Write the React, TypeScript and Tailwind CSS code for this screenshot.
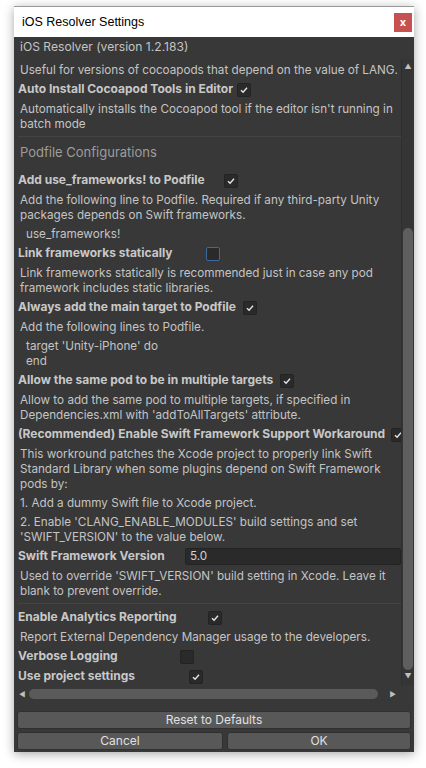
import React from "react";

const font = { fontFamily: "Inter, 'Noto Sans', sans-serif" };

function Check({ checked, focus }: { checked?: boolean; focus?: boolean }) {
  return (
    <div
      className={
        "w-[14px] h-[14px] shrink-0 rounded-[2px] border bg-[#2a2a2a] flex items-center justify-center mt-[2px] " +
        (focus ? "border-[#3d6a9e]" : "border-[#232323]")
      }
    >
      {checked && (
        <svg width="10" height="10" viewBox="0 0 10 10">
          <path d="M2 5.2 L4.1 7.3 L8 2.8" fill="none" stroke="#e4e4e4" strokeWidth="1.4" />
        </svg>
      )}
    </div>
  );
}

function Toggle({ label, x, checked, focus, first }: { label: string; x: number; checked?: boolean; focus?: boolean; first?: boolean }) {
  return (
    <div className={"flex items-center h-[18px] pl-[4px] " + (first ? "" : "mt-[2px]")}>
      <div className="font-bold text-[12px] text-[#c8c8c8] whitespace-nowrap" style={{ width: x - 18 }}>
        {label}
      </div>
      <Check checked={checked} focus={focus} />
    </div>
  );
}

function Help({ lines, code }: { lines: string[]; code?: boolean }) {
  return (
    <div className={"mt-[4px] text-[11.7px] leading-[15px] text-[#c4c4c4] whitespace-nowrap " + (code ? "pl-[12px]" : "pl-[6px]")}>
      {lines.map((l) => (
        <div key={l}>{l}</div>
      ))}
    </div>
  );
}

function Sep() {
  return <div className="mt-[4px] ml-[4px] h-px bg-[#444444] w-[383px]" />;
}

export default function App() {
  return (
    <div className="bg-white min-h-[768px] pt-[6px] pl-[14px]" style={font}>
      <div className="w-[400px] h-[746px] flex flex-col shadow-[0_2px_10px_rgba(0,0,0,0.35)] border-t border-[#9a9a9a]">
        <div className="h-[30px] bg-white flex items-center justify-between pl-[8px] pr-[2px]">
          <span className="text-[12.5px] text-black" style={{ fontFamily: "'Liberation Sans', sans-serif" }}>iOS Resolver Settings</span>
          <div className="w-[18px] h-[19px] bg-[#c75050] flex items-center justify-center text-white text-[11px] font-bold leading-none">x</div>
        </div>
        <div className="flex-1 bg-[#383838] flex flex-col">
          <div className="h-[22px] pt-[1px] pl-[6px] text-[12.1px] leading-[18px] text-[#c4c4c4]">iOS Resolver (version 1.2.183)</div>
          <div className="h-[626px] flex">
            <div className="w-[387px] overflow-hidden">
              <div className="w-[420px]">
                <Help lines={["Useful for versions of cocoapods that depend on the value of LANG."]} />
                <Toggle label="Auto Install Cocoapod Tools in Editor" x={237} checked />
                <Help lines={["Automatically installs the Cocoapod tool if the editor isn't running in", "batch mode"]} />
                <Sep />
                <div className="mt-[6px] h-[18px] pl-[6px] text-[13px] leading-[18px] text-[#9d9d9d]">Podfile Configurations</div>
                <div className="mt-[10px]">
                  <Toggle label="Add use_frameworks! to Podfile" x={224} checked first />
                </div>
                <Help lines={["Add the following line to Podfile. Required if any third-party Unity", "packages depends on Swift frameworks."]} />
                <Help code lines={["use_frameworks!"]} />
                <Toggle label="Link frameworks statically" x={206} focus />
                <Help lines={["Link frameworks statically is recommended just in case any pod", "framework includes static libraries."]} />
                <Toggle label="Always add the main target to Podfile" x={243} checked />
                <Help lines={["Add the following lines to Podfile."]} />
                <Help code lines={["target 'Unity-iPhone' do", "end"]} />
                <Toggle label="Allow the same pod to be in multiple targets" x={280} checked />
                <Help lines={["Allow to add the same pod to multiple targets, if specified in", "Dependencies.xml with 'addToAllTargets' attribute."]} />
                <Toggle label="(Recommended) Enable Swift Framework Support Workaround" x={391} checked />
                <Help lines={["This workround patches the Xcode project to properly link Swift", "Standard Library when some plugins depend on Swift Framework", "pods by:"]} />
                <Help lines={["1. Add a dummy Swift file to Xcode project."]} />
                <Help lines={["2. Enable 'CLANG_ENABLE_MODULES' build settings and set", "'SWIFT_VERSION' to the value below."]} />
                <div className="mt-[2px] flex items-center h-[18px] pl-[4px]">
                  <div className="w-[167px] font-bold text-[12px] text-[#c8c8c8] whitespace-nowrap">Swift Framework Version</div>
                  <div className="w-[216px] h-[17px] bg-[#2a2a2a] border border-[#232323] rounded-[2px] text-[11.7px] leading-[15px] text-[#d2d2d2] pl-[4px]">5.0</div>
                </div>
                <Help lines={["Used to override 'SWIFT_VERSION' build setting in Xcode. Leave it", "blank to prevent override."]} />
                <Sep />
                <div className="mt-[4px]">
                  <Toggle label="Enable Analytics Reporting" x={208} checked first />
                </div>
                <Help lines={["Report External Dependency Manager usage to the developers."]} />
                <Toggle label="Verbose Logging" x={180} />
                <Toggle label="Use project settings" x={189} checked />
              </div>
            </div>
            <div className="w-[13px] bg-[#353535] border-l border-[#2f2f2f] flex flex-col items-center">
              <div className="h-[13px] flex items-center justify-center text-[#c0c0c0] text-[7px] leading-none pt-[2px]">▲</div>
              <div className="mt-[156px] w-[10px] h-[442px] rounded-full bg-[#5e5e5e]" />
              <div className="h-[13px] flex items-center justify-center text-[#c0c0c0] text-[7px] leading-none">▼</div>
            </div>
          </div>
          <div className="h-[18px] flex items-center pl-[5px] pr-[18px]">
            <span className="text-[#c0c0c0] text-[7px] leading-none">◀</span>
            <div className="ml-[4px] w-[349px] h-[10px] rounded-full bg-[#5a5a5a]" />
            <div className="flex-1" />
            <span className="text-[#c0c0c0] text-[7px] leading-none">▶</span>
          </div>
          <div className="mt-[8px] px-[3px] flex flex-col gap-[3px]">
            <div className="h-[18px] rounded-[3px] bg-[#585858] border border-[#303030] text-[12px] leading-[16px] text-[#e0e0e0] text-center">Reset to Defaults</div>
            <div className="flex gap-[4px]">
              <div className="w-[206px] h-[18px] rounded-[3px] bg-[#585858] border border-[#303030] text-[12px] leading-[16px] text-[#e0e0e0] text-center">Cancel</div>
              <div className="flex-1 h-[18px] rounded-[3px] bg-[#585858] border border-[#303030] text-[12px] leading-[16px] text-[#e0e0e0] text-center">OK</div>
            </div>
          </div>
        </div>
      </div>
    </div>
  );
}
